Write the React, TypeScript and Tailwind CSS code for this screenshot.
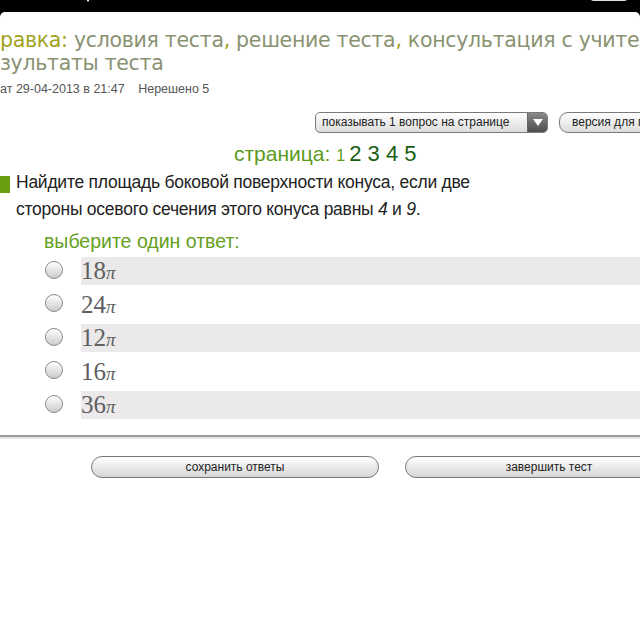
import React from "react";

const options = ["18", "24", "12", "16", "36"];

function Radio() {
  return (
    <div className="w-[18px] h-[18px] rounded-full border border-[#888] bg-gradient-to-b from-[#ffffff] to-[#cccccc] shadow-[inset_0_1px_1px_rgba(255,255,255,0.9)] shrink-0" />
  );
}

export default function App() {
  return (
    <div className="w-[640px] h-[640px] overflow-hidden bg-black" style={{ fontFamily: "'Liberation Sans', Arial, sans-serif" }}>
      {/* status bar, clipped */}
      <div className="relative h-[12px] overflow-hidden">
        <div className="absolute left-[84px] top-[-4px] w-0 h-0 border-l-[4px] border-r-[4px] border-t-[6px] border-l-transparent border-r-transparent border-t-white" />
        <div className="absolute left-[284px] top-[-19px] text-white text-[18px] font-bold tracking-wide">22:00</div>
        <div className="absolute left-[590px] top-[-7px] w-[38px] h-[8px] bg-[#ddd] rounded-sm" />
      </div>

      <div className="h-[628px] bg-white rounded-t-[5px] overflow-hidden">
        {/* title */}
        <div className="pt-[17px] text-[20.5px] leading-[23px] text-[#8a9272] whitespace-nowrap" style={{ fontFamily: "'DejaVu Sans', Verdana, sans-serif", letterSpacing: "-0.3px" }}>
          <div>
            <span className="text-[#a1a11c]">равка:</span> условия теста<span className="text-[#a1a11c]">,</span> решение теста<span className="text-[#a1a11c]">,</span> консультация с учителем
          </div>
          <div>зультаты теста</div>
        </div>

        <div className="mt-[5px] text-[12.5px] text-[#555] whitespace-nowrap">
          ат 29-04-2013 в 21:47 <span className="ml-[10px]">Нерешено 5</span>
        </div>

        {/* controls */}
        <div className="mt-[13px] flex items-center pl-[315px] whitespace-nowrap">
          <div className="flex shrink-0 h-[21px] w-[233px] rounded-[5px] border border-[#7a7a7a] bg-gradient-to-b from-white to-[#dcdcdc] overflow-hidden">
            <div className="flex-1 min-w-0 overflow-hidden pl-[6px] text-[12px] leading-[19px] text-[#222]">показывать 1 вопрос на странице</div>
            <div className="w-[20px] shrink-0 bg-gradient-to-b from-[#8a8a8a] to-[#4e4e4e] flex items-center justify-center border-l border-[#666]">
              <div className="w-0 h-0 border-l-[5px] border-r-[5px] border-t-[7px] border-l-transparent border-r-transparent border-t-white" />
            </div>
          </div>
          <div className="ml-[11px] h-[21px] w-[120px] shrink-0 rounded-[9px] border border-[#7a7a7a] bg-gradient-to-b from-white to-[#dcdcdc] pl-[12px] text-[12px] leading-[19px] text-[#222]">
            версия для печати
          </div>
        </div>

        {/* pages */}
        <div className="mt-[4px] pl-[234px] flex items-baseline whitespace-nowrap">
          <span className="text-[21px] text-[#5c9a1c]">страница:</span>
          <span className="ml-[6px] text-[16px] text-[#5c9a1c]">1</span>
          <span className="ml-[4px] text-[22px] text-[#1a5e12]">2 3 4 5</span>
        </div>

        {/* question */}
        <div className="mt-[3px] flex">
          <div className="w-[10px] h-[17px] mt-[3px] bg-[#6b9e12] shrink-0" />
          <div className="ml-[6px] text-[17.5px] leading-[27px] text-[#222] tracking-[-0.25px]">
            <div className="-mt-[4px]">Найдите площадь боковой поверхности конуса, если две</div>
            <div>
              стороны осевого сечения этого конуса равны <i>4</i> и <i>9</i>.
            </div>
          </div>
        </div>

        <div className="mt-[4px] pl-[44px] text-[19.5px] text-[#64a01e]">выберите один ответ:</div>

        {/* answers */}
        <div className="mt-[1px] flex flex-col gap-[5.5px]">
          {options.map((o, i) => (
            <div key={o} className="flex items-center h-[28px]">
              <div className="w-[45px] shrink-0" />
              <div className="-mt-[3px]">
                <Radio />
              </div>
              <div className="w-[18px] shrink-0" />
              <div
                className={`flex-1 h-[28px] text-[25px] leading-[28px] text-[#606060] ${i % 2 === 0 ? "bg-[#ebe9ea]" : ""}`}
                style={{ fontFamily: "'Liberation Serif', 'Times New Roman', serif" }}
              >
                {o}
                <i className="text-[19px]">π</i>
              </div>
            </div>
          ))}
        </div>

        {/* divider */}
        <div className="mt-[16px] h-[2px] bg-[#9a9a9a]" />
        <div className="h-[2px] bg-[#e4e4e4]" />

        {/* bottom buttons */}
        <div className="mt-[17px] flex whitespace-nowrap">
          <div className="ml-[91px] shrink-0 w-[288px] h-[22px] rounded-full border border-[#777] bg-gradient-to-b from-white to-[#d6d6d6] text-center text-[12px] leading-[20px] text-[#222]">
            сохранить ответы
          </div>
          <div className="ml-[26px] w-[288px] shrink-0 h-[22px] rounded-full border border-[#777] bg-gradient-to-b from-white to-[#d6d6d6] text-center text-[12px] leading-[20px] text-[#222]">
            завершить тест
          </div>
        </div>
      </div>
    </div>
  );
}
